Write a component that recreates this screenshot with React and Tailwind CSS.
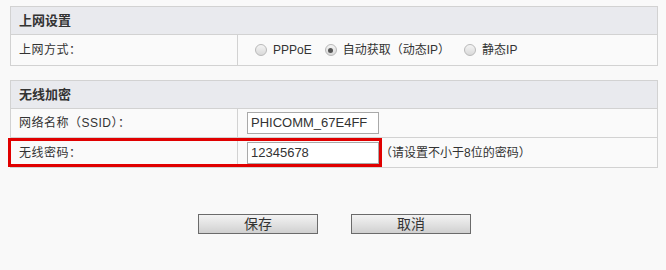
import React from 'react';

const font = { fontFamily: '"Liberation Sans", "Noto Sans CJK SC", sans-serif' };

const Radio = ({ checked, label }) => (
  <span className="flex items-center">
    <span className="flex h-[12px] w-[12px] items-center justify-center rounded-full border border-[#b9b9b9] bg-gradient-to-b from-[#f4f4f4] to-[#d9d9d9]">
      {checked && <span className="h-[5px] w-[5px] rounded-full bg-[#555]" />}
    </span>
    <span className="ml-[6px]">{label}</span>
  </span>
);

const Header = ({ children }) => (
  <div className="flex h-[28px] items-center border-b border-[#d2d2d2] bg-[#e9eaee] pl-[8px] text-[13px] font-bold text-[#333]">
    {children}
  </div>
);

const Row = ({ label, children, last, className = 'h-[29px]' }) => (
  <div className={`relative flex ${last ? '' : 'border-b border-[#d2d2d2]'} ${className}`}>
    <div className="flex w-[227px] items-center border-r border-[#d2d2d2] pl-[8px] tracking-[0.5px]">{label}</div>
    <div className="flex flex-1 items-center pl-[9px]">{children}</div>
  </div>
);

const Button = ({ children }) => (
  <button className="flex h-[20px] w-[120px] items-center justify-center border border-[#6b6b6b] bg-gradient-to-b from-[#f3f3f3] via-[#e2e2e2] to-[#d0d0d0] text-[14px] text-[#333]">
    {children}
  </button>
);

export default function App() {
  return (
    <div className="h-[270px] w-[666px] bg-[#f9f9f9] pl-[10px] pt-[6px] text-[12px] text-[#333]" style={font}>
      <div className="w-[648px] border border-[#d2d2d2] bg-[#fafafa]">
        <Header>上网设置</Header>
        <Row label="上网方式：" last className="h-[30px]">
          <div className="ml-[8px] flex items-center">
            <Radio label="PPPoE" />
            <span className="ml-[13px]"><Radio checked label="自动获取（动态IP）" /></span>
            <span className="ml-[14px]"><Radio label="静态IP" /></span>
          </div>
        </Row>
      </div>

      <div className="mt-[14px] w-[648px] border border-[#d2d2d2] bg-[#fafafa]">
        <Header>无线加密</Header>
        <Row label="网络名称（SSID）：">
          <div className="flex h-[22px] w-[132px] items-center border border-[#a9a9a9] bg-white pl-[3px] text-[13px]">PHICOMM_67E4FF</div>
        </Row>
        <Row label="无线密码：" last>
          <div className="flex h-[22px] w-[132px] items-center border border-[#a9a9a9] bg-white pl-[3px] text-[13px]">12345678</div>
          <span className="ml-[1px]">（请设置不小于8位的密码）</span>
          <div className="pointer-events-none absolute left-[-3px] top-[0px] h-[29px] w-[374px] border-[3px] border-[#e00000]" />
        </Row>
      </div>

      <div className="mt-[46px] flex pl-[188px]">
        <Button>保存</Button>
        <span className="ml-[33px]"><Button>取消</Button></span>
      </div>
    </div>
  );
}
